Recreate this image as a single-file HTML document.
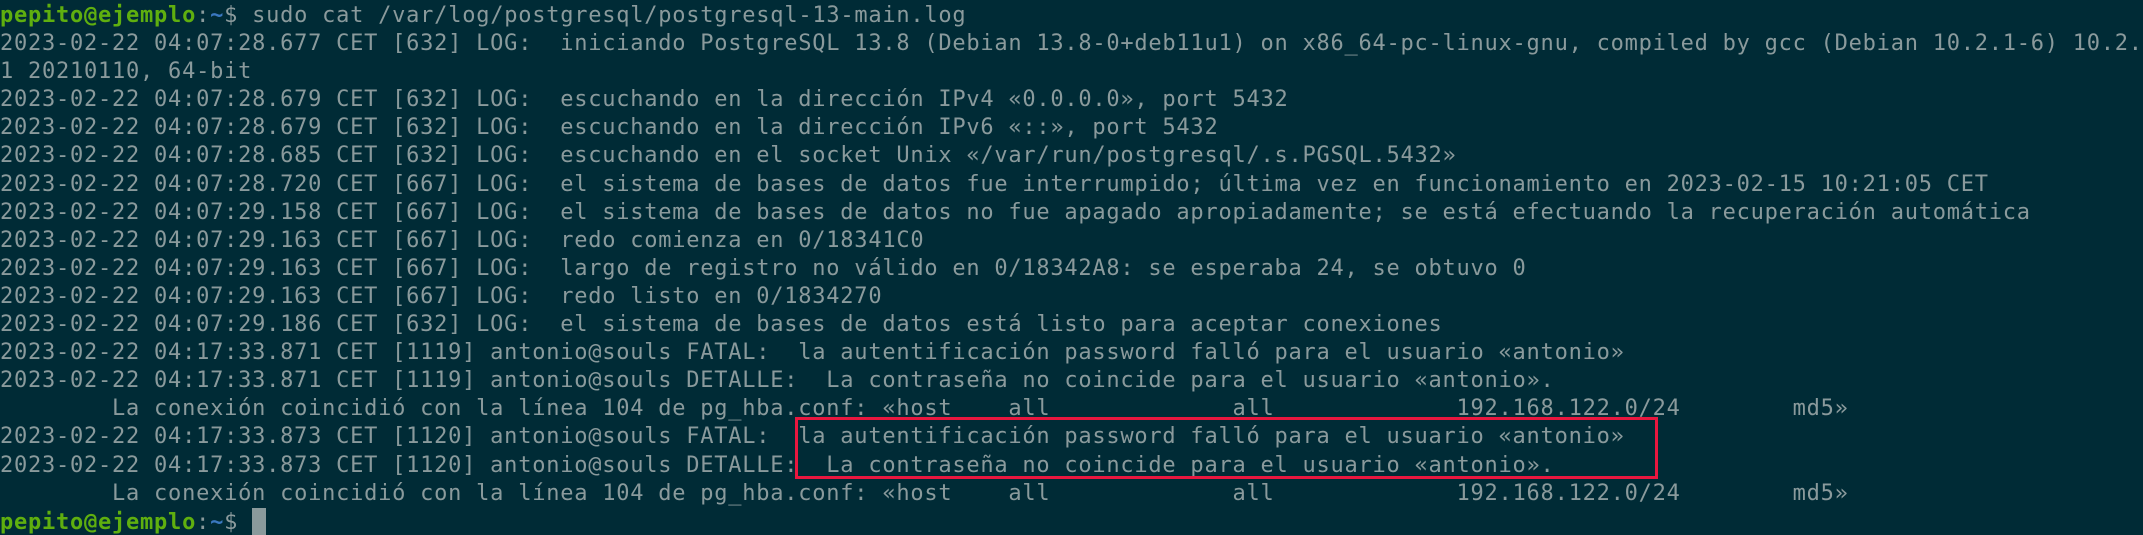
<!DOCTYPE html>
<html><head><meta charset="utf-8"><style>
html,body{margin:0;padding:0;background:#002b36;width:2143px;height:535px;overflow:hidden}
pre{margin:0;padding:2px 0 0 0;font-family:"DejaVu Sans Mono","Liberation Mono",monospace;font-size:22px;letter-spacing:0.76px;line-height:28.1px;color:#8a9a9c;white-space:pre}
.g{color:#5faf0f;font-weight:bold}
.b{color:#3a78c0;font-weight:bold}
.box{position:absolute;left:795px;top:417px;width:857px;height:56px;border:3px solid #e8173f}
.cur{display:inline-block;width:14px;height:27px;background:#8a9a9c;vertical-align:-6px}
</style></head><body>
<pre><span class="g">pepito@ejemplo</span>:<span class="b">~</span>$ sudo cat /var/log/postgresql/postgresql-13-main.log
2023-02-22 04:07:28.677 CET [632] LOG:  iniciando PostgreSQL 13.8 (Debian 13.8-0+deb11u1) on x86_64-pc-linux-gnu, compiled by gcc (Debian 10.2.1-6) 10.2.
1 20210110, 64-bit
2023-02-22 04:07:28.679 CET [632] LOG:  escuchando en la dirección IPv4 «0.0.0.0», port 5432
2023-02-22 04:07:28.679 CET [632] LOG:  escuchando en la dirección IPv6 «::», port 5432
2023-02-22 04:07:28.685 CET [632] LOG:  escuchando en el socket Unix «/var/run/postgresql/.s.PGSQL.5432»
2023-02-22 04:07:28.720 CET [667] LOG:  el sistema de bases de datos fue interrumpido; última vez en funcionamiento en 2023-02-15 10:21:05 CET
2023-02-22 04:07:29.158 CET [667] LOG:  el sistema de bases de datos no fue apagado apropiadamente; se está efectuando la recuperación automática
2023-02-22 04:07:29.163 CET [667] LOG:  redo comienza en 0/18341C0
2023-02-22 04:07:29.163 CET [667] LOG:  largo de registro no válido en 0/18342A8: se esperaba 24, se obtuvo 0
2023-02-22 04:07:29.163 CET [667] LOG:  redo listo en 0/1834270
2023-02-22 04:07:29.186 CET [632] LOG:  el sistema de bases de datos está listo para aceptar conexiones
2023-02-22 04:17:33.871 CET [1119] antonio@souls FATAL:  la autentificación password falló para el usuario «antonio»
2023-02-22 04:17:33.871 CET [1119] antonio@souls DETALLE:  La contraseña no coincide para el usuario «antonio».
        La conexión coincidió con la línea 104 de pg_hba.conf: «host    all             all             192.168.122.0/24        md5»
2023-02-22 04:17:33.873 CET [1120] antonio@souls FATAL:  la autentificación password falló para el usuario «antonio»
2023-02-22 04:17:33.873 CET [1120] antonio@souls DETALLE:  La contraseña no coincide para el usuario «antonio».
        La conexión coincidió con la línea 104 de pg_hba.conf: «host    all             all             192.168.122.0/24        md5»
<span class="g">pepito@ejemplo</span>:<span class="b">~</span>$ <span class="cur"></span></pre>
<div class="box"></div>
</body></html>
